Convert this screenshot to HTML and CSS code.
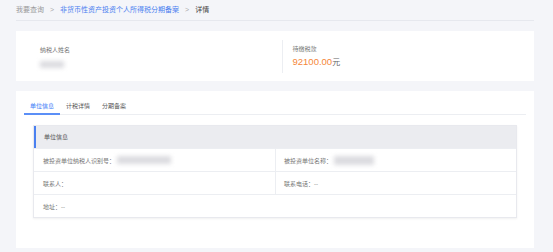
FILE: index.html
```html
<!DOCTYPE html>
<html lang="zh-CN">
<head>
    <meta charset="UTF-8">
    <meta name="viewport" content="width=device-width, initial-scale=1.0">
    <title>详情</title>
    <link rel="stylesheet" href="styles.css">
</head>
<body>
    <div class="breadcrumb">
        <span class="crumb">我要查询</span>
        <span class="sep">&gt;</span>
        <span class="crumb link">非货币性资产投资个人所得税分期备案</span>
        <span class="sep">&gt;</span>
        <span class="crumb current">详情</span>
    </div>

    <div class="card summary">
        <div class="summary-item">
            <div class="label">纳税人姓名</div>
            <div class="blur name-blur"></div>
        </div>
        <div class="summary-item divided">
            <div class="label">待缴税款</div>
            <div class="amount"><span class="num">92100.00</span><span class="unit">元</span></div>
        </div>
    </div>

    <div class="card detail">
        <div class="tabs">
            <div class="tab active">单位信息</div>
            <div class="tab">计税详情</div>
            <div class="tab">分期备案</div>
        </div>

        <div class="info-table">
            <div class="info-head">单位信息</div>
            <div class="info-row">
                <div class="cell">被投资单位纳税人识别号：<span class="blur id-blur"></span></div>
                <div class="cell divided">被投资单位名称：<span class="blur co-blur"></span></div>
            </div>
            <div class="info-row">
                <div class="cell">联系人：</div>
                <div class="cell divided">联系电话：--</div>
            </div>
            <div class="info-row">
                <div class="cell full">地址：--</div>
            </div>
        </div>
    </div>
</body>
</html>
```

FILE: styles.css
```css
body {
    margin: 0;
    padding: 0 19px 0 16px;
    background: #f4f5f9;
    font-family: "Liberation Sans", "Noto Sans CJK SC", sans-serif;
    color: #666;
}
.breadcrumb {
    display: flex;
    align-items: center;
    height: 20px;
    border-bottom: 1px solid #e6e8ee;
    font-size: 7px;
    line-height: 10px;
}
.crumb {
    color: #999;
}
.crumb.link {
    color: #4a80f0;
}
.crumb.current {
    color: #444;
}
.sep {
    color: #aaa;
    margin: 0 6px;
    font-size: 7px;
}
.card {
    background: #fff;
    margin-top: 10px;
}
.summary {
    display: flex;
    height: 50px;
    align-items: center;
}
.summary-item {
    flex: 1;
    padding-left: 24px;
    height: 33px;
    box-sizing: border-box;
    padding-top: 6px;
}
.summary-item.divided {
    border-left: 1px solid #eceef2;
    padding-left: 10px;
    padding-top: 5px;
}
.label {
    font-size: 6px;
    line-height: 8px;
    color: #777;
}
.blur {
    display: inline-block;
    background: #dcdce0;
    filter: blur(2px);
    vertical-align: middle;
}
.name-blur {
    width: 24px;
    height: 7px;
    margin-top: 3px;
}
.amount {
    margin-top: 1px;
    line-height: 12px;
}
.num {
    color: #f5873a;
    font-size: 9.5px;
}
.unit {
    color: #666;
    font-size: 8px;
}
.detail {
    padding: 8px 17px 30px;
}
.tabs {
    display: flex;
    margin: 0 -9px;
    border-bottom: 1px solid #eceef2;
}
.tab {
    padding: 2px 6px 2px;
    font-size: 6px;
    line-height: 10px;
    color: #555;
    border-bottom: 2px solid transparent;
    margin-bottom: -1px;
}
.tab.active {
    color: #3d7bf7;
    border-bottom-color: #5b8ff7;
}
.info-table {
    margin-top: 10px;
    border: 1px solid #e8e9ee;
    box-shadow: 0 1px 2px rgba(0, 0, 0, 0.06);
    font-size: 6px;
}
.info-head {
    height: 22px;
    line-height: 22px;
    background: #ebecf0;
    border-left: 2px solid #4a80f0;
    padding-left: 8px;
    color: #555;
}
.info-row {
    display: flex;
    height: 22px;
    border-top: 1px solid #eceef2;
}
.cell {
    flex: 1;
    display: flex;
    align-items: center;
    padding: 0 9px;
    color: #777;
}
.cell.divided {
    border-left: 1px solid #eceef2;
    padding-left: 8px;
}
.id-blur {
    width: 54px;
    height: 8px;
    margin-left: 2px;
}
.co-blur {
    width: 40px;
    height: 9px;
    margin-left: 2px;
}
```
